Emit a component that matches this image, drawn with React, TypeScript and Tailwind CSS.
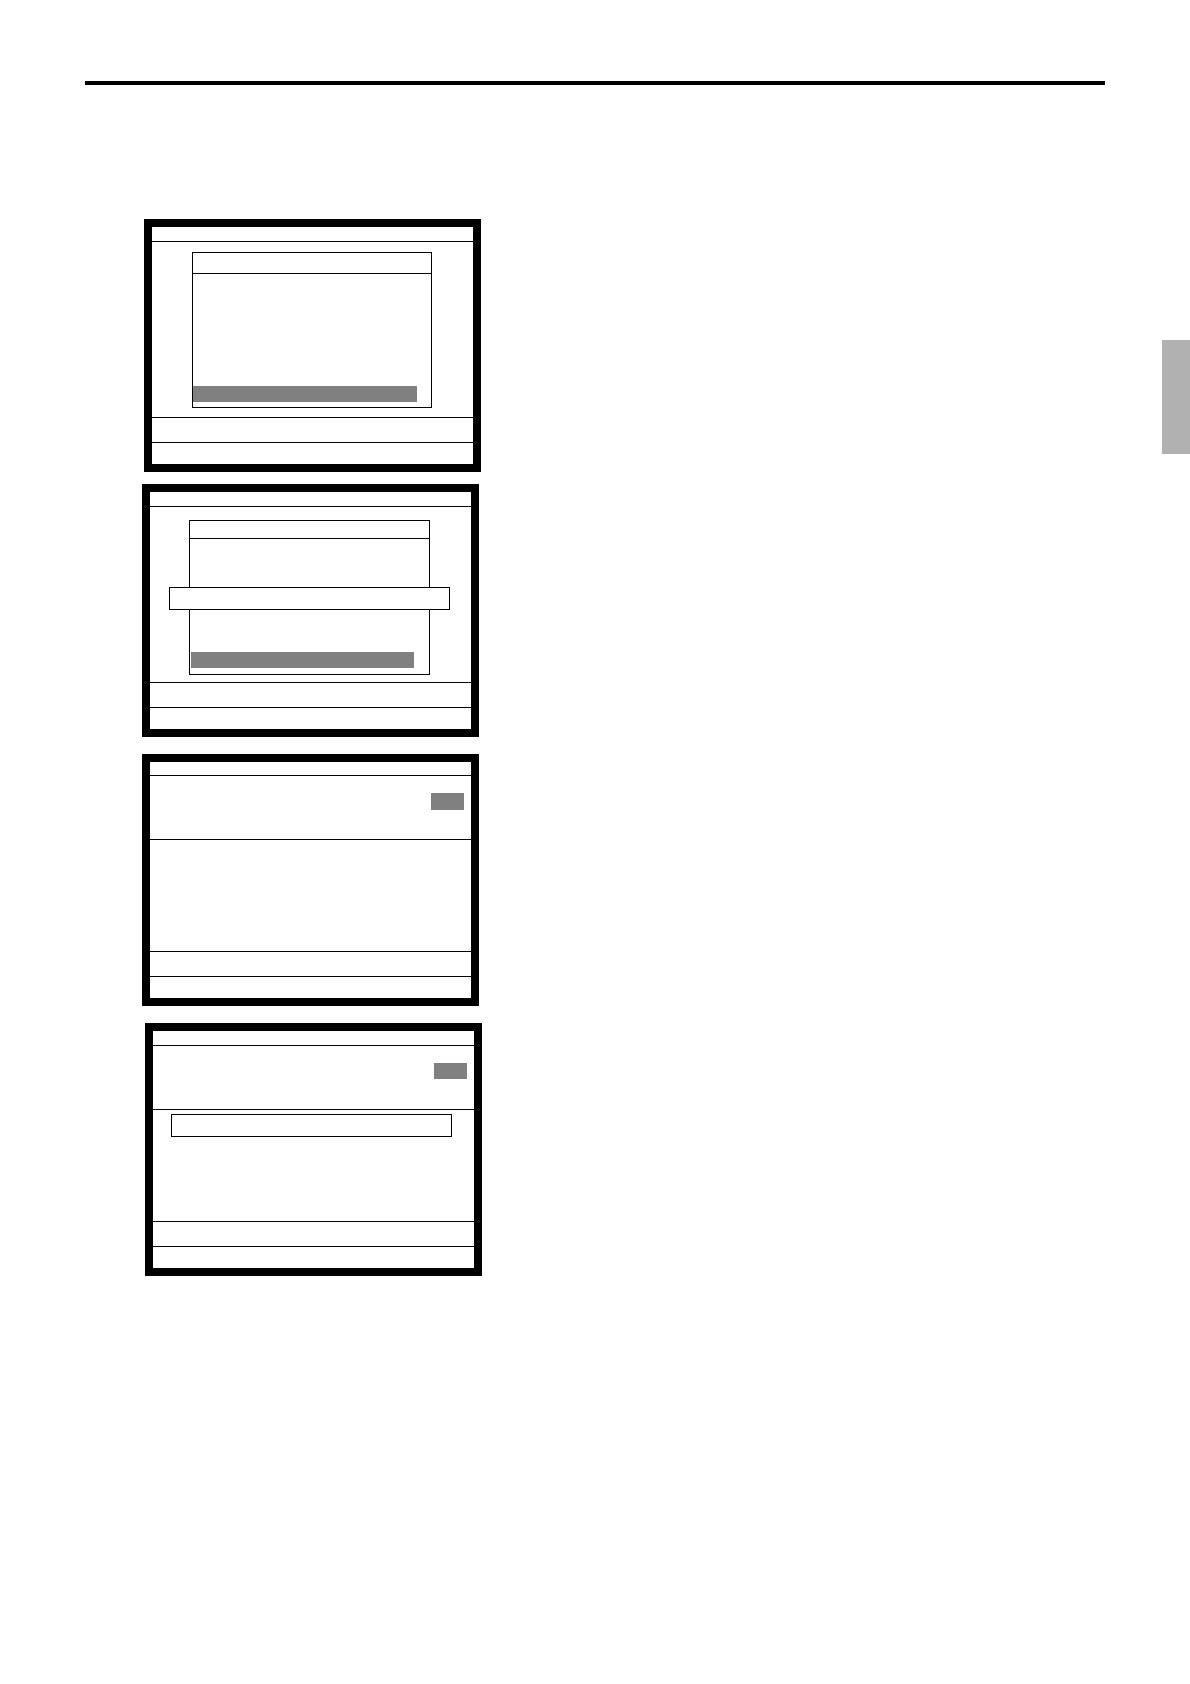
import type { ReactNode } from "react";
import clsx from "clsx";

type ScreenProps = {
  label: string;
  className?: string;
  titleClass?: string;
  children: ReactNode;
};

function Screen({ label, className, titleClass = "h-[15px]", children }: ScreenProps) {
  return (
    <section
      aria-label={label}
      className={clsx("flex w-full max-w-[337px] flex-col border-8 border-black bg-white", className)}
    >
      <header className={clsx("border-b border-black", titleClass)} />
      {children}
      <div className="h-[25px] border-t border-black" />
      <footer className="h-[22px] border-t border-black" />
    </section>
  );
}

function Message({ className }: { className?: string }) {
  return (
    <div role="status" className={clsx("h-[23px] w-[281px] border border-black bg-white", className)} />
  );
}

function MenuScreen() {
  return (
    <Screen label="Menu" className="ml-0.5">
      <div className="h-[175px] pt-2.5 pl-10">
        <div className="flex h-[156px] w-[240px] flex-col justify-between border border-black pb-[5px]">
          <div className="h-[21px] border-b border-black" />
          <div className="h-4 w-[224px] bg-[#808080]" />
        </div>
      </div>
    </Screen>
  );
}

function MenuMessageScreen() {
  return (
    <Screen label="Menu message" className="mt-3">
      <div className="relative h-[175px] pt-[13px] pl-[39px]">
        <div className="flex h-[155px] w-[241px] flex-col justify-between border border-black pb-1.5">
          <div className="h-[18px] border-b border-black" />
          <div className="ml-px h-4 w-[223px] bg-[#808080]" />
        </div>
        <Message className="absolute top-20 left-[19px]" />
      </div>
    </Screen>
  );
}

function EntryScreen() {
  return (
    <Screen label="Entry" className="mt-[17px]" titleClass="h-[14px]">
      <div className="flex h-16 justify-end border-b border-black pt-[17px] pr-[7px]">
        <div className="h-[17px] w-[33px] bg-[#808080]" />
      </div>
      <div className="h-[111px]" />
    </Screen>
  );
}

function EntryMessageScreen() {
  return (
    <Screen label="Entry message" className="mt-[17px] ml-[3px]">
      <div className="flex h-16 justify-end border-b border-black pt-[17px] pr-[7px]">
        <div className="h-4 w-[33px] bg-[#808080]" />
      </div>
      <div className="h-[111px] pt-1 pl-[18px]">
        <Message />
      </div>
    </Screen>
  );
}

export default function App() {
  return (
    <div className="min-h-screen bg-white pt-[81px] font-['Liberation_Sans',sans-serif]">
      <hr className="mx-[85px] border-t-4 border-black" />
      <div className="flex items-start justify-between pt-[134px]">
        <main className="flex min-w-0 flex-1 flex-col pl-[142px]">
          <MenuScreen />
          <MenuMessageScreen />
          <EntryScreen />
          <EntryMessageScreen />
        </main>
        <aside aria-label="Section" className="mt-[121px] h-[114px] w-7 shrink-0 bg-[#b1b1b1]" />
      </div>
    </div>
  );
}
